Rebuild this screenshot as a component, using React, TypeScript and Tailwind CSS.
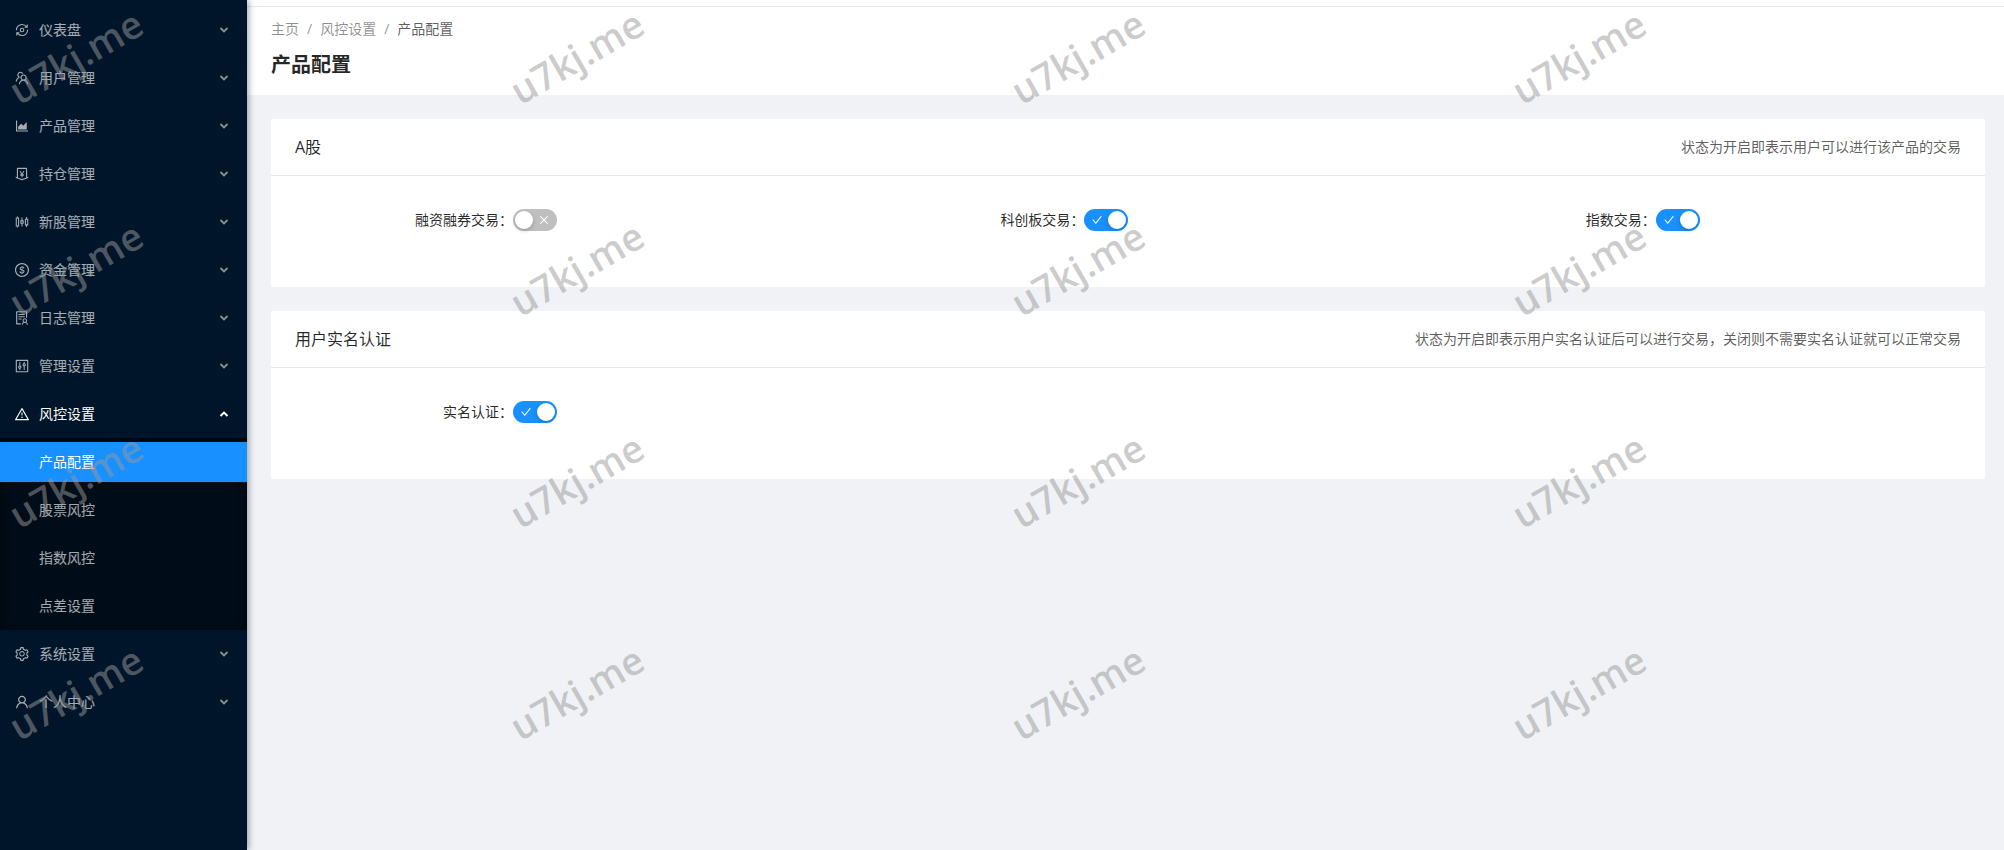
import clsx from "clsx";
import { ComponentType, ReactNode, useState } from "react";
import {
  AiOutlineAreaChart,
  AiOutlineCheck,
  AiOutlineClose,
  AiOutlineControl,
  AiOutlineDollarCircle,
  AiOutlineMoneyCollect,
  AiOutlineSetting,
  AiOutlineSliders,
  AiOutlineSolution,
  AiOutlineTeam,
  AiOutlineUser,
  AiOutlineWarning,
} from "react-icons/ai";

interface IIconProps {
  className?: string;
}

interface IMenuItem {
  label: string;
  icon: ComponentType<IIconProps>;
  children?: string[];
}

function CIconDashboard({ className }: IIconProps) {
  return (
    <svg
      className={className}
      viewBox="0 0 16 16"
      fill="none"
      stroke="currentColor"
      strokeWidth="1.1"
    >
      <circle cx="8" cy="8" r="1.8" />
      <path d="M2.4 8.4C2.2 5 4.8 2.5 8 2.5c1.9 0 3.5.8 4.6 2.3M13.6 7.6c.2 3.4-2.4 5.9-5.6 5.9-1.9 0-3.5-.8-4.6-2.3" />
      <path d="M13.2 2.6v2.6h-2.6M2.8 13.4v-2.6h2.6" />
    </svg>
  );
}

const MENU: IMenuItem[] = [
  { label: "仪表盘", icon: CIconDashboard },
  { label: "用户管理", icon: AiOutlineTeam },
  { label: "产品管理", icon: AiOutlineAreaChart },
  { label: "持仓管理", icon: AiOutlineMoneyCollect },
  { label: "新股管理", icon: AiOutlineSliders },
  { label: "资金管理", icon: AiOutlineDollarCircle },
  { label: "日志管理", icon: AiOutlineSolution },
  { label: "管理设置", icon: AiOutlineControl },
  {
    label: "风控设置",
    icon: AiOutlineWarning,
    children: ["产品配置", "股票风控", "指数风控", "点差设置"],
  },
  { label: "系统设置", icon: AiOutlineSetting },
  { label: "个人中心", icon: AiOutlineUser },
];

const WATERMARKS = Array.from({ length: 16 }, (_, i) => i);

function CArrow({ open }: { open: boolean }) {
  return (
    <svg
      className={clsx("shrink-0", open ? "rotate-180" : "opacity-80")}
      width="10"
      height="10"
      viewBox="0 0 10 10"
      fill="none"
      stroke="currentColor"
      strokeWidth="2"
    >
      <path d="M1.5 3 5 6.4 8.5 3" />
    </svg>
  );
}

function CSidebar() {
  const [openLabel, setOpenLabel] = useState("风控设置");
  const [active, setActive] = useState("产品配置");

  return (
    <nav className="z-10 w-[247px] shrink-0 bg-[#001529] pt-[6px] text-white/65 shadow-[2px_0_6px_rgba(0,21,41,0.35)]">
      {MENU.map((item) => {
        const open = item.label === openLabel;
        return (
          <div key={item.label} className="flex flex-col">
            <button
              type="button"
              aria-expanded={open}
              onClick={() => setOpenLabel(open ? "" : item.label)}
              className={clsx(
                "my-1 flex h-10 items-center pr-[18px] pl-[14px]",
                open && "text-white",
              )}
            >
              <item.icon className="mr-[9px] size-4 shrink-0" />
              <span className="grow text-left">{item.label}</span>
              <CArrow open={open} />
            </button>
            {open && item.children && (
              <ul className="space-y-2 bg-[#000c17] py-1 shadow-[inset_0_2px_8px_rgba(0,0,0,0.45)]">
                {item.children.map((child) => (
                  <li key={child}>
                    <a
                      href="#"
                      onClick={() => setActive(child)}
                      className={clsx(
                        "flex h-10 items-center pl-[39px]",
                        child === active && "bg-[#1890ff] text-white",
                      )}
                    >
                      {child}
                    </a>
                  </li>
                ))}
              </ul>
            )}
          </div>
        );
      })}
    </nav>
  );
}

function CSwitch({
  label,
  defaultOn = false,
}: {
  label: string;
  defaultOn?: boolean;
}) {
  const [on, setOn] = useState(defaultOn);

  return (
    <label className="flex h-10 items-center px-6 text-black/85">
      <span className="w-5/12 text-right">{label}：</span>
      <span
        className={clsx(
          "relative flex h-[22px] w-11 items-center rounded-full p-[2px] text-xs text-white",
          on ? "bg-[#1890ff]" : "flex-row-reverse bg-[#bfbfbf]",
        )}
      >
        <input
          type="checkbox"
          role="switch"
          checked={on}
          onChange={(e) => setOn(e.target.checked)}
          className="absolute inset-0 cursor-pointer opacity-0"
        />
        <span className="flex grow justify-center">
          {on ? <AiOutlineCheck /> : <AiOutlineClose />}
        </span>
        <span className="size-[18px] rounded-full bg-white shadow-[0_2px_4px_rgba(0,35,11,0.2)]" />
      </span>
    </label>
  );
}

function CCard({
  title,
  extra,
  children,
}: {
  title: string;
  extra: string;
  children: ReactNode;
}) {
  return (
    <section className="rounded-xs bg-white">
      <header className="flex h-[57px] items-center justify-between border-b border-[#e8e8e8] px-6">
        <h2 className="text-base text-black/85">{title}</h2>
        <p>{extra}</p>
      </header>
      <div className="grid grid-cols-3 pt-6 pb-[47px]">{children}</div>
    </section>
  );
}

function CWatermark() {
  return (
    <div
      aria-hidden="true"
      className="pointer-events-none absolute inset-0 z-20 grid auto-rows-[212px] grid-cols-4 overflow-hidden"
    >
      {WATERMARKS.map((i) => (
        <div
          key={i}
          className="flex h-[112px] w-[150px] items-center justify-center"
        >
          <span className="-rotate-30 font-['Open_Sans'] text-[38px] font-semibold text-[#999]/50">
            u7kj.me
          </span>
        </div>
      ))}
    </div>
  );
}

export default function App() {
  return (
    <div className="relative flex min-h-screen bg-[#f0f2f5] font-['Open_Sans','Noto_Sans_CJK_SC',sans-serif] text-sm text-black/65">
      <CSidebar />

      <main className="min-w-0 grow">
        <div className="h-[7px] border-b border-[#e8e8e8] bg-white" />
        <div className="bg-white px-6 pt-3 pb-[14px]">
          <ol className="flex text-black/45">
            <li>
              <a href="#">主页</a>
              <span className="mx-2">/</span>
            </li>
            <li>
              <a href="#">风控设置</a>
              <span className="mx-2">/</span>
            </li>
            <li className="text-black/65">产品配置</li>
          </ol>
          <h1 className="mt-[10px] text-xl leading-8 font-bold text-black/85">
            产品配置
          </h1>
        </div>

        <div className="space-y-6 py-6 pr-[19px] pl-6">
          <CCard title="A股" extra="状态为开启即表示用户可以进行该产品的交易">
            <CSwitch label="融资融券交易" />
            <CSwitch label="科创板交易" defaultOn />
            <CSwitch label="指数交易" defaultOn />
          </CCard>
          <CCard
            title="用户实名认证"
            extra="状态为开启即表示用户实名认证后可以进行交易，关闭则不需要实名认证就可以正常交易"
          >
            <CSwitch label="实名认证" defaultOn />
          </CCard>
        </div>
      </main>

      <CWatermark />
    </div>
  );
}
